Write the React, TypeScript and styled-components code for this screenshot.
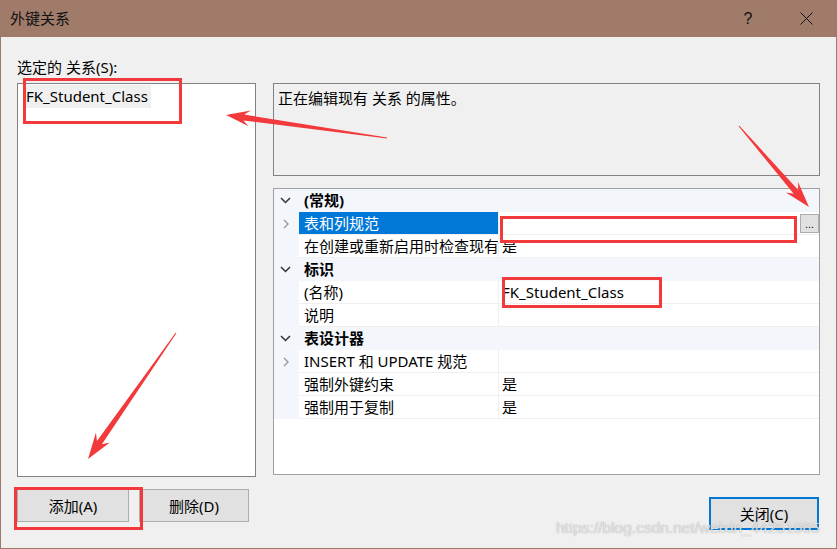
import React from "react";
import styled, { createGlobalStyle } from "styled-components";

const Global = createGlobalStyle`
  html, body { margin: 0; padding: 0; }
  body { background: #f0f0f0; font-family: "Noto Sans", "Noto Sans CJK SC", sans-serif; }
  * { box-sizing: border-box; }
`;

const FONT = `"Noto Sans", "Noto Sans CJK SC", sans-serif`;

const Window = styled.div`
  position: relative;
  width: 837px;
  height: 549px;
  background: #f0f0f0;
  border: 1px solid #a07a69;
  border-top: none;
  display: flex;
  flex-direction: column;
  overflow: hidden;
  font-family: ${FONT};
  font-size: 15px;
  color: #000;
`;

const TitleBar = styled.div`
  height: 37px;
  flex: none;
  background: #a07b6a;
  display: flex;
  align-items: center;
  padding-left: 9px;
  font-family: "Noto Sans CJK SC", sans-serif;
  font-size: 15px;
  color: #111;
`;

const TitleText = styled.div`
  flex: 1;
  padding-bottom: 2px;
`;

const TitleBtn = styled.div<{ $w: number }>`
  width: ${(p) => p.$w}px;
  height: 37px;
  display: flex;
  align-items: center;
  justify-content: center;
  font-family: "Liberation Sans", sans-serif;
  font-size: 16px;
  color: #111;
`;

const Body = styled.div`
  flex: 1;
  display: flex;
  gap: 17px;
  padding: 0 16px 0 16px;
`;

const LeftCol = styled.div`
  width: 239px;
  display: flex;
  flex-direction: column;
`;

const RightCol = styled.div`
  width: 547px;
  display: flex;
  flex-direction: column;
  padding-top: 46px;
`;

const Label = styled.div`
  margin-top: 20px;
  height: 20px;
  line-height: 20px;
`;

const ListBox = styled.div`
  margin-top: 6px;
  height: 394px;
  background: #fff;
  border: 1px solid #828282;
  padding: 1px 0 0 8px;
`;

const ListItem = styled.div`
  display: inline-block;
  height: 23px;
  line-height: 23px;
  background: #f0f0f0;
  padding: 0 3px 0 0;
`;

const ButtonRow = styled.div`
  display: flex;
  gap: 10px;
  margin-top: 12px;
`;

const Button = styled.div<{ $w: number; $focus?: boolean }>`
  width: ${(p) => p.$w}px;
  height: 33px;
  background: #e1e1e1;
  border: ${(p) => (p.$focus ? "2px solid #0078d7" : "1px solid #adadad")};
  display: flex;
  align-items: center;
  justify-content: center;
  font-size: 15px;
`;

const DescBox = styled.div`
  height: 93px;
  border: 1px solid #828282;
  background: #f0f0f0;
  padding: 3px 4px;
  line-height: 22px;
`;

const Grid = styled.div`
  margin-top: 12px;
  height: 287px;
  border: 1px solid #a0a0a0;
  background: #fff;
  display: flex;
  flex-direction: column;
`;

const CatRow = styled.div`
  height: 23px;
  display: flex;
  background: #f3f6fb;
  font-weight: bold;
  line-height: 23px;
`;

const Gutter = styled.div`
  width: 25px;
  flex: none;
  background: #f3f6fb;
  display: flex;
  align-items: center;
  justify-content: center;
  padding-right: 2px;
`;

const CatName = styled.div`
  padding-left: 5px;
`;

const PropRow = styled.div`
  height: 23px;
  display: flex;
  line-height: 22px;
`;

const NameCell = styled.div<{ $sel?: boolean }>`
  width: 200px;
  flex: none;
  padding-left: 5px;
  white-space: nowrap;
  overflow: hidden;
  background: ${(p) => (p.$sel ? "#0078d7" : "#fff")};
  color: ${(p) => (p.$sel ? "#fff" : "#000")};
  border-bottom: 1px solid #efefef;
  border-right: 1px solid #efefef;
`;

const ValueCell = styled.div`
  flex: 1;
  padding-left: 3px;
  white-space: nowrap;
  overflow: hidden;
  border-bottom: 1px solid #efefef;
  display: flex;
  align-items: flex-start;
  justify-content: space-between;
`;

const EllipsisBtn = styled.div`
  margin-top: 2px;
  width: 19px;
  height: 19px;
  background: #e1e1e1;
  border: 1px solid #adadad;
  font-size: 11px;
  line-height: 19px;
  text-align: center;
  font-family: "Liberation Sans", sans-serif;
`;

const CloseRow = styled.div`
  display: flex;
  justify-content: flex-end;
  padding-right: 1px;
  margin-top: 22px;
`;

const RedBox = styled.div<{ $x: number; $y: number; $w: number; $h: number }>`
  position: absolute;
  left: ${(p) => p.$x}px;
  top: ${(p) => p.$y}px;
  width: ${(p) => p.$w}px;
  height: ${(p) => p.$h}px;
  border: 3px solid #f23a3c;
  pointer-events: none;
`;

const Overlay = styled.svg`
  position: absolute;
  left: -1px;
  top: 0;
  pointer-events: none;
`;

const Watermark = styled.div`
  position: absolute;
  left: 555px;
  top: 519px;
  font-family: "Liberation Sans", Arial, sans-serif;
  font-size: 15.5px;
  color: rgba(255, 255, 255, 0.75);
  text-shadow: 0 0 1px rgba(110, 110, 110, 0.8);
  pointer-events: none;
`;

const ChevronDown = () => (
  <svg width="11" height="7" viewBox="0 0 11 7">
    <polyline points="1,1 5.5,5.5 10,1" fill="none" stroke="#333" strokeWidth="1.5" />
  </svg>
);

const ChevronRight = () => (
  <svg width="6" height="10" viewBox="0 0 6 10">
    <polyline points="1,1 5,5 1,9" fill="none" stroke="#999" strokeWidth="1.4" />
  </svg>
);

function arrowPoints(x1: number, y1: number, x2: number, y2: number, headLen = 25, headW = 17, shaftW = 6, tailW = 1) {
  const dx = x2 - x1;
  const dy = y2 - y1;
  const L = Math.hypot(dx, dy);
  const ux = dx / L;
  const uy = dy / L;
  const px = -uy;
  const py = ux;
  const back = [x2 - ux * headLen, y2 - uy * headLen];
  const join = [x2 - ux * (headLen - 6), y2 - uy * (headLen - 6)];
  const pts = [
    [x1 + (px * tailW) / 2, y1 + (py * tailW) / 2],
    [join[0] + (px * shaftW) / 2, join[1] + (py * shaftW) / 2],
    [back[0] + (px * headW) / 2, back[1] + (py * headW) / 2],
    [x2, y2],
    [back[0] - (px * headW) / 2, back[1] - (py * headW) / 2],
    [join[0] - (px * shaftW) / 2, join[1] - (py * shaftW) / 2],
    [x1 - (px * tailW) / 2, y1 - (py * tailW) / 2],
  ];
  return pts.map((p) => p.map((v) => v.toFixed(1)).join(",")).join(" ");
}

type Row = { name: string; value?: string; expand?: boolean; selected?: boolean; button?: boolean };
const sections: { title: string; rows: Row[] }[] = [
  {
    title: "(常规)",
    rows: [
      { name: "表和列规范", value: "", expand: true, selected: true, button: true },
      { name: "在创建或重新启用时检查现有数据", value: "是" },
    ],
  },
  {
    title: "标识",
    rows: [
      { name: "(名称)", value: "FK_Student_Class" },
      { name: "说明", value: "" },
    ],
  },
  {
    title: "表设计器",
    rows: [
      { name: "INSERT 和 UPDATE 规范", value: "", expand: true },
      { name: "强制外键约束", value: "是" },
      { name: "强制用于复制", value: "是" },
    ],
  },
];

export default function App() {
  return (
    <>
      <Global />
      <Window>
        <TitleBar>
          <TitleText>外键关系</TitleText>
          <TitleBtn $w={56}>?</TitleBtn>
          <TitleBtn $w={60}>
            <svg width="13" height="13" viewBox="0 0 13 13">
              <line x1="0.5" y1="0.5" x2="12.5" y2="12.5" stroke="#111" strokeWidth="1" />
              <line x1="12.5" y1="0.5" x2="0.5" y2="12.5" stroke="#111" strokeWidth="1" />
            </svg>
          </TitleBtn>
        </TitleBar>
        <Body>
          <LeftCol>
            <Label>选定的 关系(S):</Label>
            <ListBox>
              <ListItem>FK_Student_Class</ListItem>
            </ListBox>
            <ButtonRow>
              <Button $w={112}>添加(A)</Button>
              <Button $w={110}>删除(D)</Button>
            </ButtonRow>
          </LeftCol>
          <RightCol>
            <DescBox>正在编辑现有 关系 的属性。</DescBox>
            <Grid>
              {sections.map((s) => (
                <React.Fragment key={s.title}>
                  <CatRow>
                    <Gutter>
                      <ChevronDown />
                    </Gutter>
                    <CatName>{s.title}</CatName>
                  </CatRow>
                  {s.rows.map((r) => (
                    <PropRow key={r.name}>
                      <Gutter>{r.expand ? <ChevronRight /> : null}</Gutter>
                      <NameCell $sel={r.selected}>{r.name}</NameCell>
                      <ValueCell>
                        <span>{r.value}</span>
                        {r.button ? <EllipsisBtn>...</EllipsisBtn> : null}
                      </ValueCell>
                    </PropRow>
                  ))}
                </React.Fragment>
              ))}
            </Grid>
            <CloseRow>
              <Button $w={110} $focus>
                关闭(C)
              </Button>
            </CloseRow>
          </RightCol>
        </Body>

        <RedBox $x={22} $y={78} $w={159} $h={46} />
        <RedBox $x={499} $y={216} $w={297} $h={27} />
        <RedBox $x={501} $y={277} $w={160} $h={31} />
        <RedBox $x={13} $y={487} $w={129} $h={43} />

        <Overlay width="837" height="549" viewBox="0 0 837 549">
          <polygon points={arrowPoints(387, 138, 226, 115, 24, 16, 6, 1)} fill="#f23a3c" />
          <polygon points={arrowPoints(739, 126, 809, 207, 26, 16, 6, 1)} fill="#f23a3c" />
          <polygon points={arrowPoints(176, 333, 88, 459, 26, 17, 6, 1)} fill="#f23a3c" />
        </Overlay>
        <Watermark>https://blog.csdn.net/weixin_44251065</Watermark>
      </Window>
    </>
  );
}
